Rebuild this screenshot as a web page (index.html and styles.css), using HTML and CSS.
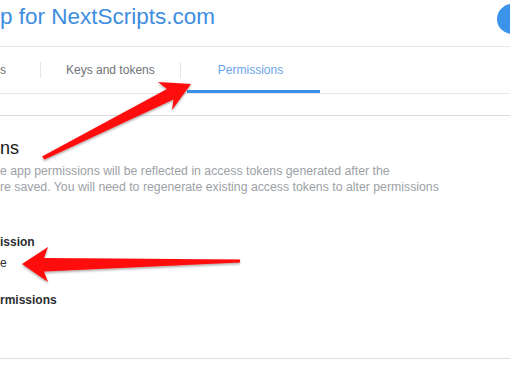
FILE: index.html
```html
<!DOCTYPE html>
<html lang="en">
<head>
    <meta charset="UTF-8">
    <meta name="viewport" content="width=device-width, initial-scale=1.0">
    <title>App Permissions</title>
    <link rel="stylesheet" href="styles.css">
</head>
<body>
    <div class="page">
        <div class="header">
            <div class="app-title">p for NextScripts.com</div>
            <div class="avatar"></div>
        </div>

        <div class="tabs">
            <div class="tab tab-first">s</div>
            <div class="tab-divider"></div>
            <div class="tab tab-keys">Keys and tokens</div>
            <div class="tab-divider"></div>
            <div class="tab tab-active">Permissions</div>
        </div>

        <div class="panel">
            <div class="panel-title">ns</div>
            <div class="panel-text">e app permissions will be reflected in access tokens generated after the<br>re saved. You will need to regenerate existing access tokens to alter permissions</div>
            <div class="label label-one">ission</div>
            <div class="option">e</div>
            <div class="label label-two">rmissions</div>
        </div>
    </div>

    <svg class="arrows" width="510" height="382" viewBox="0 0 510 382">
        <defs>
            <filter id="shadow" x="-10%" y="-10%" width="130%" height="140%">
                <feDropShadow dx="0" dy="1.5" stdDeviation="1.2" flood-color="#000" flood-opacity="0.35"/>
            </filter>
        </defs>
        <polygon filter="url(#shadow)" fill="#ff0a0a"
                 points="191,84 158,82 167,89 42,156.5 44.5,159.5 173.5,99.5 172,110"/>
        <polygon filter="url(#shadow)" fill="#ff0a0a"
                 points="22,264 48,247 44,258 240,259.5 240,262.5 44,271.5 48,282"/>
    </svg>
</body>
</html>
```

FILE: styles.css
```css
* {
    margin: 0;
    padding: 0;
    box-sizing: border-box;
}
body {
    width: 510px;
    height: 382px;
    overflow: hidden;
    position: relative;
    background-color: #ffffff;
    font-family: "Liberation Sans", Arial, sans-serif;
}
.page {
    display: flex;
    flex-direction: column;
}

.header {
    display: flex;
    justify-content: space-between;
    height: 47px;
    padding-top: 1px;
    border-bottom: 1px solid #e6e8eb;
}
.app-title {
    font-size: 22.5px;
    line-height: 32px;
    color: #3f8ddf;
}
.avatar {
    width: 30px;
    height: 30px;
    margin-top: 3px;
    margin-right: -17px;
    border-radius: 50%;
    background-color: #3b93ea;
}

.tabs {
    display: flex;
    height: 47px;
    border-bottom: 1px solid #e6e8eb;
    font-size: 12px;
}
.tab {
    display: flex;
    align-items: center;
    color: #6f7377;
}
.tab-first {
    width: 40px;
}
.tab-divider {
    width: 1px;
    height: 16px;
    align-self: center;
    margin-top: -1px;
    background-color: #e4e6e9;
}
.tab-keys {
    width: 139px;
    padding-left: 25px;
}
.tab-active {
    position: relative;
    width: 133px;
    margin-left: 6px;
    justify-content: center;
    padding-right: 6px;
    color: #6ba4ea;
}
.tab-active::after {
    content: "";
    position: absolute;
    left: 0;
    right: 0;
    bottom: 0;
    height: 3px;
    background-color: #3b8fe6;
}

.panel {
    display: flex;
    flex-direction: column;
    margin-top: 21px;
    padding-bottom: 50px;
    border-top: 1px solid #d9dde1;
    border-bottom: 1px solid #dde1e6;
}
.panel-title {
    margin-top: 21px;
    font-size: 18px;
    line-height: 22px;
    color: #14171a;
}
.panel-text {
    margin-top: 5px;
    font-size: 12.3px;
    line-height: 15.5px;
    color: #9da1a6;
    white-space: nowrap;
}
.label {
    font-size: 12px;
    line-height: 16px;
    font-weight: bold;
    color: #2b2e31;
}
.label-one {
    margin-top: 39px;
}
.label-two {
    margin-top: 21px;
}
.option {
    margin-top: 5px;
    font-size: 12px;
    line-height: 16px;
    color: #2b2e31;
}

.arrows {
    position: absolute;
    top: 0;
    left: 0;
    pointer-events: none;
}
```
